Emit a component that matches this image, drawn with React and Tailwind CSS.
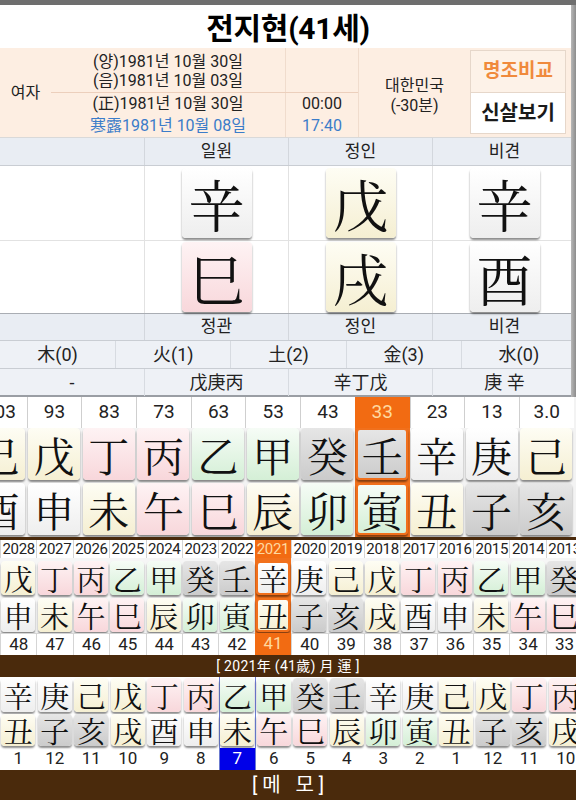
import React from "react";

const SANS = "font-['Roboto','Noto_Sans_CJK_KR',sans-serif]";
const HANZI = "font-['Noto_Serif_CJK_KR','Noto_Serif_CJK_SC','Noto_Sans_CJK_KR',serif]";

const GRAD = {
  wood: "bg-linear-to-b from-[#f6fcf6] to-[#d4efd6]",
  fire: "bg-linear-to-b from-[#fef3f4] to-[#f8d7db]",
  earth: "bg-linear-to-b from-[#fefdf4] to-[#f5efd2]",
  metal: "bg-linear-to-b from-[#ffffff] to-[#eeeeee]",
  water: "bg-linear-to-b from-[#e6e6e6] to-[#cbcbcb]",
};
const EL = {
  甲: "wood", 乙: "wood", 丙: "fire", 丁: "fire", 戊: "earth", 己: "earth", 庚: "metal", 辛: "metal", 壬: "water", 癸: "water",
  寅: "wood", 卯: "wood", 巳: "fire", 午: "fire", 辰: "earth", 戌: "earth", 丑: "earth", 未: "earth", 申: "metal", 酉: "metal", 亥: "water", 子: "water",
};

function Tile({ ch, size, extra = "" }) {
  return (
    <div
      className={`${GRAD[EL[ch]]} ${size} ${extra} ${HANZI} shrink-0 rounded-[4px] shadow-[0_2px_2px_rgba(0,0,0,0.45)] flex items-center justify-center text-[#111] leading-none`}
    >
      {ch}
    </div>
  );
}

const DAE = {
  num: ["103", "93", "83", "73", "63", "53", "43", "33", "23", "13", "3.0"],
  stem: ["己", "戊", "丁", "丙", "乙", "甲", "癸", "壬", "辛", "庚", "己"],
  br: ["酉", "申", "未", "午", "巳", "辰", "卯", "寅", "丑", "子", "亥"],
};
const SE = {
  year: [2028, 2027, 2026, 2025, 2024, 2023, 2022, 2021, 2020, 2019, 2018, 2017, 2016, 2015, 2014, 2013],
  stem: ["戊", "丁", "丙", "乙", "甲", "癸", "壬", "辛", "庚", "己", "戊", "丁", "丙", "乙", "甲", "癸"],
  br: ["申", "未", "午", "巳", "辰", "卯", "寅", "丑", "子", "亥", "戌", "酉", "申", "未", "午", "巳"],
  age: [48, 47, 46, 45, 44, 43, 42, 41, 40, 39, 38, 37, 36, 35, 34, 33],
};
const MON = {
  stem: ["辛", "庚", "己", "戊", "丁", "丙", "乙", "甲", "癸", "壬", "辛", "庚", "己", "戊", "丁", "丙"],
  br: ["丑", "子", "亥", "戌", "酉", "申", "未", "午", "巳", "辰", "卯", "寅", "丑", "子", "亥", "戌"],
  num: [1, 12, 11, 10, 9, 8, 7, 6, 5, 4, 3, 2, 1, 12, 11, 10],
};

export default function App() {
  return (
    <div className={`${SANS} relative w-[576px] h-[800px] overflow-hidden bg-white text-[#222]`}>
      {/* top bar */}
      <div className="h-[5px] bg-[#6e6e6e]" />
      {/* title */}
      <div className="h-[43px] flex items-center justify-center pt-[3px] text-[30px] font-bold text-black tracking-[-0.3px]">
        전지현(41세)
      </div>

      {/* info table */}
      <div className="h-[90px] flex bg-[#fdeee2] text-[16px] text-[#222] border-b border-[#d9d9d9]">
        <div className="w-[51px] flex items-center justify-center">여자</div>
        <div className="w-[307px] flex flex-col">
          <div className="h-[44px] flex">
            <div className="w-[234px] flex flex-col items-center justify-center leading-[19px] pt-[2px]">
              <div>(양)1981년 10월 30일</div>
              <div>(음)1981년 10월 03일</div>
            </div>
            <div className="w-[73px] border-l border-[#f0dccd]" />
          </div>
          <div className="h-[46px] flex border-t border-[#eccfbc]">
            <div className="w-[234px] flex flex-col items-center justify-center leading-[22px]">
              <div>(正)1981년 10월 30일</div>
              <div className="text-[#3b7cc9]">寒露1981년 10월 08일</div>
            </div>
            <div className="w-[73px] border-l border-[#f0dccd] flex flex-col items-center justify-center leading-[22px]">
              <div>00:00</div>
              <div className="text-[#3b7cc9]">17:40</div>
            </div>
          </div>
        </div>
        <div className="w-[112px] border-l border-[#f0dccd] flex flex-col items-center justify-center leading-[20px] pt-[6px]">
          <div>대한민국</div>
          <div>(-30분)</div>
        </div>
        <div className="w-[96px] flex flex-col py-[2px]">
          <div className="h-[43px] flex items-center justify-center bg-[#fdf2e8] border border-[#e6d7ca] text-[19px] font-bold text-[#f08a3c]">
            명조비교
          </div>
          <div className="h-[41px] flex items-center justify-center bg-white border border-t-0 border-[#e6d7ca] text-[20px] font-bold text-[#1a1a1a]">
            신살보기
          </div>
        </div>
      </div>

      {/* pillar header */}
      <div className="h-[28px] grid grid-cols-4 bg-[#e9edf3] border-b border-[#c9cdd3] text-[17px]">
        {["", "일원", "정인", "비견"].map((t, i) => (
          <div key={i} className={`flex items-center justify-center ${i ? "border-l border-[#d3d7dd]" : ""}`}>{t}</div>
        ))}
      </div>
      {/* stems */}
      <div className="h-[74px] grid grid-cols-4 bg-white">
        {["", "辛", "戊", "辛"].map((c, i) => (
          <div key={i} className={`flex items-center justify-center ${i ? "border-l border-[#e2e2e2]" : ""}`}>
            {c && <Tile ch={c} size="w-[70px] h-[70px] text-[56px]" />}
          </div>
        ))}
      </div>
      {/* branches */}
      <div className="h-[73px] grid grid-cols-4 bg-white border-t border-[#e2e2e2]">
        {["", "巳", "戌", "酉"].map((c, i) => (
          <div key={i} className={`flex items-center justify-center ${i ? "border-l border-[#e2e2e2]" : ""}`}>
            {c && <Tile ch={c} size="w-[70px] h-[70px] text-[56px]" />}
          </div>
        ))}
      </div>
      {/* bottom labels */}
      <div className="h-[28px] grid grid-cols-4 bg-[#e9edf3] border-t border-[#a9adb3] border-b border-b-[#c9cdd3] text-[17px]">
        {["", "정관", "정인", "비견"].map((t, i) => (
          <div key={i} className={`flex items-center justify-center ${i ? "border-l border-[#d3d7dd]" : ""}`}>{t}</div>
        ))}
      </div>
      {/* elements */}
      <div className="h-[28px] grid grid-cols-5 bg-[#eef1f6] border-b border-[#c9cdd3] text-[18px]">
        {["木(0)", "火(1)", "土(2)", "金(3)", "水(0)"].map((t, i) => (
          <div key={i} className={`flex items-center justify-center ${i ? "border-l border-[#d7dbe1]" : ""}`}>{t}</div>
        ))}
      </div>
      {/* hidden stems */}
      <div className="h-[28px] grid grid-cols-4 bg-[#eef1f6] border-b-2 border-[#9a9ea4] text-[18px]">
        {["-", "戊庚丙", "辛丁戊", "庚 辛"].map((t, i) => (
          <div key={i} className={`flex items-center justify-center ${i ? "border-l border-[#d7dbe1]" : ""}`}>{t}</div>
        ))}
      </div>

      {/* daewoon */}
      <div className="h-[140px] overflow-hidden bg-[#f3f3f3]">
        <div className="flex ml-[-28px]">
          {DAE.num.map((n, i) => {
            const sel = i === 7;
            return (
              <div key={i} className={`w-[54.7px] shrink-0 flex flex-col ${sel ? "bg-[#f1701c]" : ""}`}>
                <div
                  className={`h-[31px] flex items-center justify-center text-[19px] ${
                    sel ? "bg-[#f26b12] text-[#ffd9a0]" : "bg-white border-l border-[#cfcfcf] text-[#222]"
                  }`}
                >
                  {n}
                </div>
                <div className="h-[109px] flex flex-col items-center gap-[3px]">
                  <Tile ch={DAE.stem[i]} size="w-[52px] h-[52px] text-[41px]" extra={sel ? "border-2 border-[#f1701c]" : ""} />
                  <Tile ch={DAE.br[i]} size="w-[52px] h-[52px] text-[41px]" extra={sel ? "border-2 border-[#f1701c]" : ""} />
                </div>
              </div>
            );
          })}
        </div>
      </div>
      <div className="h-[3px] bg-[#4a2a0c]" />

      {/* seun */}
      <div className="h-[115px] flex overflow-hidden bg-[#f6f6f6]">
        {SE.year.map((y, i) => {
          const sel = i === 7;
          return (
            <div key={i} className={`w-[36.4px] shrink-0 flex flex-col ${sel ? "bg-[#f1701c]" : ""}`}>
              <div
                className={`h-[18px] flex items-center justify-center text-[15px] tracking-[-0.3px] ${
                  sel ? "bg-[#f26b12] text-[#ffd9a0]" : "bg-white border-l border-[#d5d5d5]"
                }`}
              >
                {y}
              </div>
              <div className="h-[75px] flex flex-col items-center pt-[3px] gap-[3px]">
                <Tile ch={SE.stem[i]} size="w-[34px] h-[34px] text-[29px]" extra={sel ? "border-2 border-[#f1701c]" : ""} />
                <Tile ch={SE.br[i]} size="w-[34px] h-[34px] text-[29px]" extra={sel ? "border-2 border-[#f1701c]" : ""} />
              </div>
              <div
                className={`h-[22px] flex items-center justify-center text-[17px] ${
                  sel ? "bg-[#f26b12] text-[#ffd9a0]" : "bg-white border-l border-t border-[#d5d5d5]"
                }`}
              >
                {SE.age[i]}
              </div>
            </div>
          );
        })}
      </div>

      {/* month title bar */}
      <div className="h-[22px] bg-[#4a2a0c] flex items-center justify-center text-[14px] text-white tracking-[0.3px]">
        [ 2021年 (41歲) 月 運 ]
      </div>

      {/* month luck */}
      <div className="h-[93px] flex overflow-hidden bg-white">
        {MON.num.map((n, i) => {
          const sel = i === 6;
          return (
            <div key={i} className={`w-[36.5px] shrink-0 flex flex-col ${sel ? "border-x border-[#6b7bd0]" : ""}`}>
              <div className="h-[71px] flex flex-col items-center pt-[1px] gap-[2px]">
                <Tile ch={MON.stem[i]} size="w-[34px] h-[34px] text-[29px]" />
                <Tile ch={MON.br[i]} size="w-[34px] h-[32px] text-[29px]" />
              </div>
              <div
                className={`h-[22px] flex items-center justify-center text-[17px] ${
                  sel ? "bg-[#0000e8] text-white" : "text-[#222]"
                }`}
              >
                {n}
              </div>
            </div>
          );
        })}
      </div>

      {/* memo bar */}
      <div className="h-[30px] bg-[#4a2a0c] flex items-center justify-center text-[20px] text-white">
        [ 메&nbsp;&nbsp;&nbsp;모 ]
      </div>

      {/* right edge scroll shadow */}
      <div className="absolute right-0 top-[5px] h-[392px] w-[5px] bg-linear-to-r from-[#b8b8b8] to-[#8c8c8c]" />
    </div>
  );
}
